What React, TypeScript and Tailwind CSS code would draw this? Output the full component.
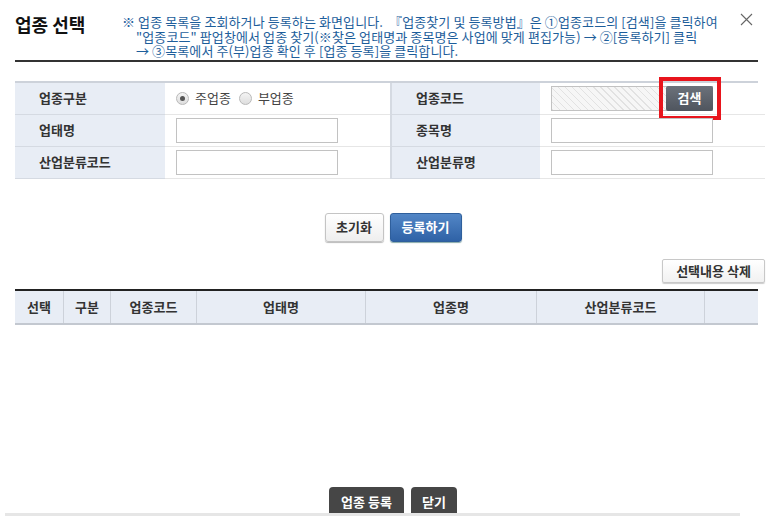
import React from "react"

const headers = ["선택", "구분", "업종코드", "업태명", "업종명", "산업분류코드", ""]

function Radio({ checked, label }: { checked?: boolean; label: string }) {
  return (
    <label className="flex items-center gap-[6px] text-[13px] text-[#444]">
      <span className="flex h-[13px] w-[13px] items-center justify-center rounded-full border border-[#b9b9b9] bg-gradient-to-b from-[#f4f4f4] to-[#dedede]">
        {checked && <span className="h-[5px] w-[5px] rounded-full bg-[#555]"></span>}
      </span>
      {label}
    </label>
  )
}

function Label({ children, first }: { children: React.ReactNode; first?: boolean }) {
  return (
    <div
      className={`flex h-[32px] items-center bg-[#e8edf5] pl-[24px] text-[13px] font-bold text-[#333] border-b border-[#d5dae2] ${
        first ? "" : "border-l-2 border-l-[#d5dae2]"
      }`}
    >
      {children}
    </div>
  )
}

function Value({ children }: { children?: React.ReactNode }) {
  return <div className="relative flex h-[32px] items-center pl-[11px] border-b border-[#e6e6e6]">{children}</div>
}

function TextInput() {
  return <input className="h-[25px] w-[162px] border border-[#c2c2c2] bg-white outline-none" />
}

export default function App() {
  return (
    <div className="relative h-[516px] w-[773px] overflow-hidden bg-white font-['Noto_Sans_CJK_KR','Noto_Sans',sans-serif] text-[#333]">
      {/* header */}
      <div className="flex items-start pl-[15px] pt-[11px]">
        <h1 className="w-[107px] text-[18px] font-bold leading-[26px] text-[#111]">업종 선택</h1>
        <div className="pt-[4px] text-[13px] leading-[14.5px] tracking-[0.1px] text-[#1d5e9b]">
          <p className="whitespace-nowrap">※ 업종 목록을 조회하거나 등록하는 화면입니다.&nbsp;&nbsp;『업종찾기 및 등록방법』은 ①업종코드의 [검색]을 클릭하여</p>
          <p className="whitespace-nowrap pl-[14px]">"업종코드" 팝업창에서 업종 찾기(※찾은 업태명과 종목명은 사업에 맞게 편집가능) → ②[등록하기] 클릭</p>
          <p className="whitespace-nowrap pl-[14px]">→ ③목록에서 주(부)업종 확인 후 [업종 등록]을 클릭합니다.</p>
        </div>
        <button className="ml-auto mr-[20px] mt-[2px] text-[#666]">
          <svg width="13" height="13" viewBox="0 0 13 13" fill="none" stroke="currentColor" strokeWidth="1.1">
            <path d="M1 1L12 12M12 1L1 12" />
          </svg>
        </button>
      </div>
      <div className="mx-[15px] mt-[1px] h-[2px] bg-[#333]"></div>

      {/* search form */}
      <div className="mx-[15px] mt-[19px] grid grid-cols-[150px_225px_150px_225px] border-t-2 border-[#cdd2da]">
        <Label first>업종구분</Label>
        <Value>
          <div className="flex items-center gap-[8px]">
            <Radio checked label="주업종" />
            <Radio label="부업종" />
          </div>
        </Value>
        <Label>업종코드</Label>
        <Value>
          <div className="h-[25px] w-[162px] border border-[#c2c2c2] bg-[repeating-linear-gradient(45deg,#e2e2e2_0_1px,#f6f6f6_1px_5px)]"></div>
          <button className="absolute left-[126px] top-[3px] h-[25px] w-[47px] rounded-[2px] bg-gradient-to-b from-[#6c727b] to-[#4f555e] text-[13px] font-bold text-white">
            검색
          </button>
          <div className="absolute left-[119px] top-[-6px] h-[43px] w-[62px] border-4 border-[#e8141c]"></div>
        </Value>

        <Label first>업태명</Label>
        <Value>
          <TextInput />
        </Value>
        <Label>종목명</Label>
        <Value>
          <TextInput />
        </Value>

        <Label first>산업분류코드</Label>
        <Value>
          <TextInput />
        </Value>
        <Label>산업분류명</Label>
        <Value>
          <TextInput />
        </Value>
      </div>

      {/* action buttons */}
      <div className="mt-[34px] flex justify-center gap-[6px] pl-[13px]">
        <button className="h-[29px] w-[59px] rounded-[3px] border border-[#c4c4c4] bg-gradient-to-b from-white to-[#eeeeee] text-[13px] font-bold text-[#333] shadow-[0_1px_1px_#bbb]">
          초기화
        </button>
        <button className="h-[29px] w-[72px] rounded-[3px] border border-[#2f5f9c] bg-gradient-to-b from-[#5286c6] to-[#2f62a6] text-[13px] font-bold text-white shadow-[0_1px_1px_#8aa]">
          등록하기
        </button>
      </div>

      <div className="mx-[8px] mt-[17px] flex justify-end">
        <button className="h-[24px] w-[103px] rounded-[2px] border border-[#c8c8c8] bg-gradient-to-b from-white to-[#f1f1f1] text-[13px] font-bold text-[#333] shadow-[0_1px_1px_#ccc]">
          선택내용 삭제
        </button>
      </div>

      {/* list table */}
      <div className="mx-[15px] mt-[6px] grid grid-cols-[48px_47px_86px_169px_171px_168px_61px] border-t-2 border-b-2 border-t-[#222] border-b-[#c3c8d0] bg-[#e8edf5]">
        {headers.map((h, i) => (
          <div
            key={i}
            className={`flex h-[32px] items-center justify-center text-[13px] font-bold text-[#333] ${
              i > 0 ? "border-l border-[#cdd2da]" : ""
            }`}
          >
            {h}
          </div>
        ))}
      </div>

      {/* footer */}
      <div className="absolute bottom-0 left-0 right-0">
        <div className="flex justify-center gap-[7px] pl-[13px]">
          <button className="h-[29px] w-[75px] rounded-t-[4px] bg-[#464646] text-[13px] font-bold text-white">업종 등록</button>
          <button className="h-[29px] w-[46px] rounded-t-[4px] bg-[#464646] text-[13px] font-bold text-white">닫기</button>
        </div>
        <div className="absolute bottom-0 left-[5px] h-[3px] w-[735px] bg-[#e6e6e6]"></div>
      </div>
    </div>
  )
}
